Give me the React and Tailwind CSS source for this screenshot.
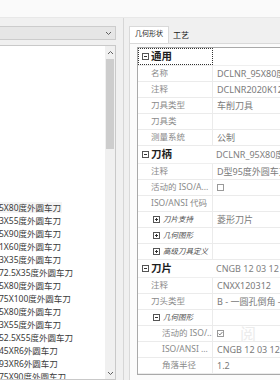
import React from 'react';

const Box = ({ plus }) => (
  <svg width="7" height="7" viewBox="0 0 7 7" className="shrink-0">
    <rect x="0.5" y="0.5" width="6" height="6" fill="white" stroke="#555" />
    <path d="M2 3.5h3" stroke="#333" />
    {plus && <path d="M3.5 2v3" stroke="#333" />}
  </svg>
);

const Check = ({ on }) => (
  <svg width="7" height="7" viewBox="0 0 7 7">
    <rect x="0.5" y="0.5" width="6" height="6" fill="white" stroke="#9a9a9a" />
    {on && <path d="M1.6 3.6l1.3 1.3 2.5-2.8" fill="none" stroke="#666" strokeWidth="0.9" />}
  </svg>
);

const Chevron = ({ up }) => (
  <svg width="7" height="5" viewBox="0 0 7 5">
    <path d={up ? 'M1 4l2.5-2.5L6 4' : 'M1 1l2.5 2.5L6 1'} fill="none" stroke="#606060" strokeWidth="1" />
  </svg>
);

const tools = [
  '5X80度外圆车刀',
  '3X55度外圆车刀',
  '5X90度外圆车刀',
  '1X60度外圆车刀',
  '3X35度外圆车刀',
  '72.5X35度外圆车刀',
  '5X80度外圆车刀',
  '75X100度外圆车刀',
  '5X80度外圆车刀',
  '3X55度外圆车刀',
  '52.5X55度外圆车刀',
  '45XR6外圆车刀',
  '93XR6外圆车刀',
  '75X90度外圆车刀',
];

const rows = [
  { t: 'head', name: '通用', focus: true },
  { name: '名称', value: 'DCLNR_95X80度外圆车刀' },
  { name: '注释', value: 'DCLNR2020K12' },
  { name: '刀具类型', value: '车削刀具' },
  { name: '刀具类', value: '' },
  { name: '测量系统', value: '公制' },
  { t: 'head', name: '刀柄', value: 'DCLNR_95X80度外圆车刀' },
  { name: '注释', value: 'D型95度外圆车刀杆' },
  { name: '活动的 ISO/A...', check: false },
  { name: 'ISO/ANSI 代码', value: '' },
  { t: 'group', name: '刀片支持', value: '菱形刀片', plus: true },
  { t: 'group', name: '几何图形', plus: true },
  { t: 'group', name: '高级刀具定义', plus: true },
  { t: 'head', name: '刀片', value: 'CNGB 12 03 12' },
  { name: '注释', value: 'CNXX120312' },
  { name: '刀头类型', value: 'B - 一圆孔倒角 - 开' },
  { t: 'group', name: '几何图形', plus: false },
  { name: '活动的 ISO/...', check: true, deep: true },
  { name: 'ISO/ANSI ...', value: 'CNGB 12 03 12', deep: true },
  { name: '角落半径', value: '1.2', deep: true },
];

const Row = ({ r }) => {
  if (r.t === 'head') {
    return (
      <div className="h-[18px] flex items-stretch border-b border-[#efefef]">
        <div
          className={
            'w-[75px] shrink-0 flex items-center gap-[2px] pl-[3px] ' +
            (r.focus ? 'border border-dotted border-[#333]' : 'pl-[4px]')
          }
        >
          <Box />
          <span className="text-[10.5px] font-bold text-[#1e1e1e] leading-none">{r.name}</span>
        </div>
        <div className="flex-1 flex items-center pl-[3px] text-[9px] text-[#808080] whitespace-nowrap overflow-hidden">
          {r.value}
        </div>
      </div>
    );
  }
  return (
    <div className="h-[16px] flex items-stretch border-b border-[#ebebeb]">
      <div
        className={
          'w-[75px] shrink-0 flex items-center border-r border-[#ebebeb] whitespace-nowrap overflow-hidden ' +
          (r.t === 'group' ? 'pl-[15px] gap-[3px]' : r.deep ? 'pl-[24px]' : 'pl-[13px]')
        }
      >
        {r.t === 'group' && <Box plus={r.plus} />}
        <span
          className={
            'leading-none ' +
            (r.t === 'group' ? 'text-[7.5px] italic text-[#4a4a4a]' : 'text-[8.5px] text-[#8a8a8a]')
          }
        >
          {r.name}
        </span>
      </div>
      <div className="flex-1 flex items-center pl-[4px] text-[9px] text-[#7a7a7a] whitespace-nowrap overflow-hidden">
        {r.check !== undefined ? <Check on={r.check} /> : r.value}
      </div>
    </div>
  );
};

const App = () => {
  return (
    <div className="w-[280px] h-[380px] overflow-hidden bg-[#f0f0f0] flex flex-col font-['Noto_Sans','Noto_Sans_CJK_SC',sans-serif]">
      <div className="h-[18px] shrink-0 bg-[#fafafa] border-b border-[#e8e8e8]" />

      <div className="flex flex-1 min-h-0">
        {/* left: tool library */}
        <div className="w-[116px] shrink-0 flex flex-col pt-[8px] gap-[5px]">
          <div className="h-[14px] bg-[#e6e6e6] border border-[#cccccc] border-l-0 flex items-center justify-end pr-[3px]">
            <Chevron />
          </div>
          <div className="flex-1 min-h-0 flex bg-white border-y border-r border-[#c9c9c9]">
            <div className="flex-1 overflow-hidden text-[8.5px] text-[#3a3a3a] leading-[13px] whitespace-nowrap">
              <div className="h-[13px] mt-[1px] ml-[-14px]">Mo</div>
              <div className="h-[141px]" />
              {tools.map((t, i) => (
                <div key={i} className="h-[13px] ml-[-1px]">
                  <span className={i === 0 ? 'bg-[#f4f4f4] pr-[1px]' : ''}>{t}</span>
                </div>
              ))}
            </div>
            <div className="w-[10px] shrink-0 bg-[#f0f0f0] flex flex-col items-center">
              <div className="h-[13px] flex items-center">
                <Chevron up />
              </div>
              <div className="w-[8px] h-[90px] bg-[#cdcdcd]" />
              <div className="flex-1" />
              <div className="h-[12px] flex items-center">
                <Chevron />
              </div>
            </div>
          </div>
        </div>

        {/* splitter */}
        <div className="w-[8px] shrink-0 border-r border-[#d6d6d6]" />

        {/* right: properties */}
        <div className="flex-1 min-w-0 flex flex-col pl-[5px] pt-[8px]">
          <div className="h-[17px] shrink-0 flex items-end">
            <div className="h-[18px] px-[5px] pb-[3px] bg-white border border-b-0 border-[#d9d9d9] flex items-center text-[7px] text-[#222] mb-[-1px] relative">
              几何形状
            </div>
            <div className="h-[15px] px-[4px] pb-[2px] flex items-center text-[8px] text-[#222]">工艺</div>
          </div>
          <div className="flex-1 min-h-0 bg-[#fbfbfb] border-t border-l border-[#d9d9d9] pl-[7px] pt-[3px] relative">
            <div className="bg-white border-t border-l border-b border-[#a9a9a9] overflow-hidden">
              {rows.map((r, i) => (
                <Row key={i} r={r} />
              ))}
            </div>
            <span className="absolute left-[110px] top-[282px] text-[16px] text-[#ececec] leading-none">阅</span>
          </div>
        </div>
      </div>
    </div>
  );
};

export default App;
